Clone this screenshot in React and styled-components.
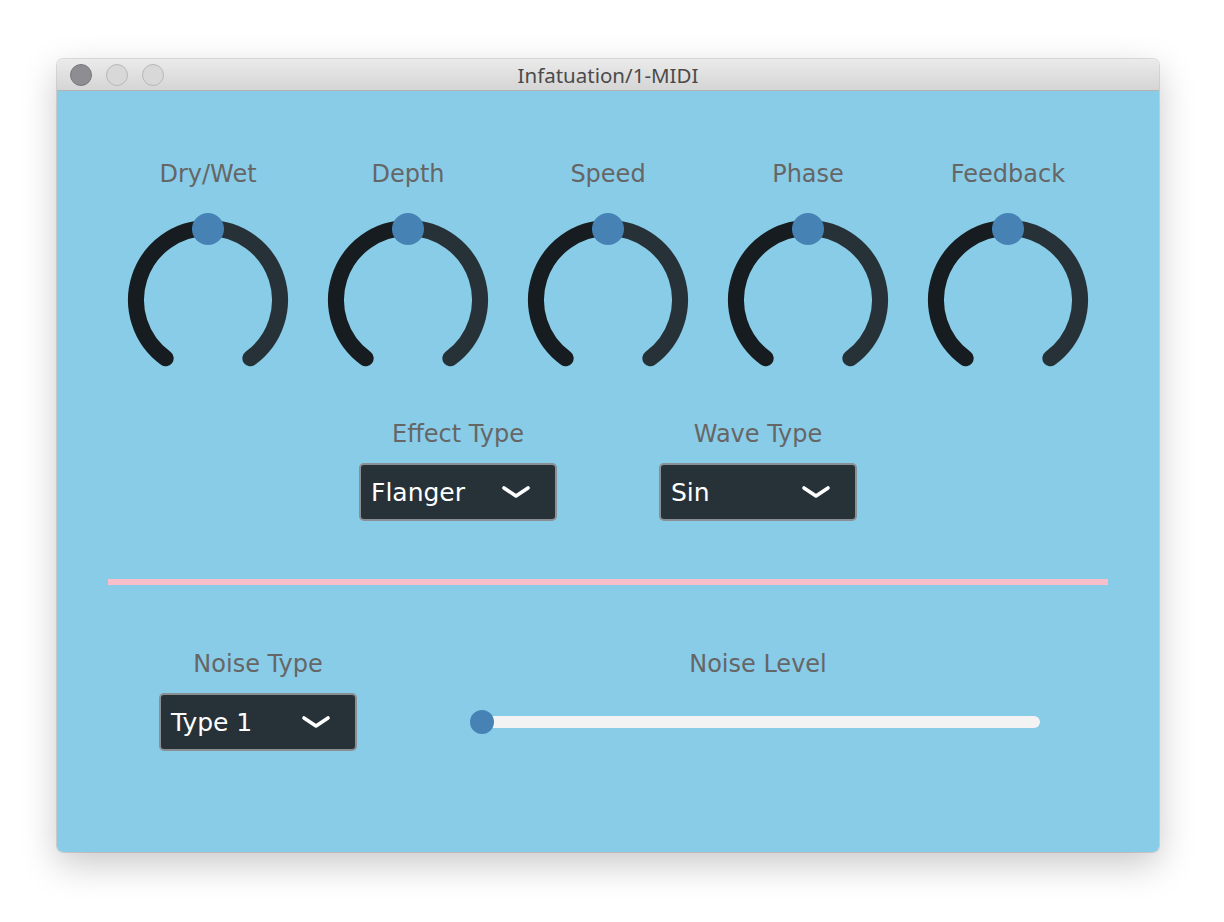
import React from "react";
import styled, { createGlobalStyle } from "styled-components";

const GlobalStyle = createGlobalStyle`
  body {
    margin: 0;
    background: #ffffff;
    font-family: "DejaVu Sans", "Liberation Sans", sans-serif;
  }
`;

const Page = styled.div`
  padding: 59px 0 0 57px;
  height: 922px;
  box-sizing: border-box;
`;

const Window = styled.div`
  width: 1102px;
  height: 793px;
  border-radius: 6px;
  overflow: hidden;
  display: flex;
  flex-direction: column;
  box-shadow: 0 12px 36px rgba(0, 0, 0, 0.22), 0 0 0 1px rgba(0, 0, 0, 0.12);
`;

const TitleBar = styled.div`
  height: 32px;
  flex: none;
  position: relative;
  display: flex;
  align-items: center;
  justify-content: center;
  background: linear-gradient(#ebebeb, #d5d5d5);
  border-bottom: 1px solid #b4b4b4;
  box-sizing: border-box;
`;

const Lights = styled.div`
  position: absolute;
  left: 13px;
  top: 5px;
  display: flex;
  gap: 14px;
`;

const Light = styled.span`
  width: 22px;
  height: 22px;
  border-radius: 50%;
  box-sizing: border-box;
  background: ${(p) => (p.$active ? "#8e8d92" : "#d8d8d8")};
  border: 1px solid ${(p) => (p.$active ? "#77767b" : "#b7b7b7")};
`;

const Title = styled.div`
  font-family: "Noto Sans", "DejaVu Sans", sans-serif;
  font-size: 20.5px;
  color: #4b4b4b;
  padding-top: 1px;
`;

const Content = styled.div`
  flex: 1;
  background: #89cce8;
  padding: 68px 51px 0;
  display: flex;
  flex-direction: column;
  align-items: center;
`;

const Label = styled.div`
  font-size: 24px;
  line-height: 28px;
  color: #666666;
  text-align: center;
  padding-top: 1px;
`;

const KnobRow = styled.div`
  display: grid;
  grid-template-columns: repeat(5, 200px);
`;

const KnobCell = styled.div`
  display: flex;
  flex-direction: column;
  align-items: center;
  gap: 22px;
`;

const KnobSvg = styled.svg`
  display: block;
`;

const SelectRow = styled.div`
  margin-top: 39px;
  display: grid;
  grid-template-columns: repeat(2, 300px);
`;

const Field = styled.div`
  display: flex;
  flex-direction: column;
  align-items: center;
  gap: 15px;
`;

const Select = styled.div`
  width: 198px;
  height: 58px;
  box-sizing: border-box;
  background: #263238;
  border: 2px solid #8a8f93;
  border-radius: 5px;
  display: flex;
  align-items: center;
  justify-content: space-between;
  padding: 0 24px 0 10px;
  color: #ffffff;
  font-size: 25px;
`;

const Divider = styled.div`
  align-self: stretch;
  height: 6px;
  margin-top: 58px;
  background: #f8bfcb;
`;

const BottomRow = styled.div`
  margin-top: 64px;
  align-self: stretch;
  display: grid;
  grid-template-columns: 300px 600px;
  column-gap: 50px;
`;

const SliderArea = styled.div`
  align-self: stretch;
  height: 58px;
  display: flex;
  align-items: center;
  padding: 0 18px 0 24px;
`;

const Track = styled.div`
  position: relative;
  flex: 1;
  height: 12px;
  border-radius: 6px;
  background: #f3f3f3;
`;

const Thumb = styled.span`
  position: absolute;
  top: 50%;
  width: 24px;
  height: 24px;
  border-radius: 50%;
  background: #4682b4;
  transform: translate(-50%, -50%);
`;

const Chevron = () => (
  <svg width="30" height="14" viewBox="0 0 30 14">
    <path
      d="M3 3 L15 11 L27 3"
      fill="none"
      stroke="#ffffff"
      strokeWidth="3.6"
      strokeLinecap="round"
      strokeLinejoin="round"
    />
  </svg>
);

function Knob({ value }) {
  const cx = 100;
  const cy = 90;
  const r = 72;
  const start = -0.8 * Math.PI;
  const end = 0.8 * Math.PI;
  const angle = start + (end - start) * value;
  const pt = (a, rad = r) => [cx + rad * Math.sin(a), cy - rad * Math.cos(a)];
  const [sx, sy] = pt(start);
  const [ex, ey] = pt(end);
  const [vx, vy] = pt(angle);
  const [tx, ty] = pt(angle, 71);
  return (
    <KnobSvg width="200" height="170" viewBox="0 0 200 170">
      <path
        d={`M${sx} ${sy} A${r} ${r} 0 0 1 ${vx} ${vy}`}
        fill="none"
        stroke="#161c1f"
        strokeWidth="16"
        strokeLinecap="round"
      />
      <path
        d={`M${vx} ${vy} A${r} ${r} 0 0 1 ${ex} ${ey}`}
        fill="none"
        stroke="#263238"
        strokeWidth="16"
        strokeLinecap="round"
      />
      <circle cx={tx} cy={ty} r="16" fill="#4682b4" />
    </KnobSvg>
  );
}

const knobs = ["Dry/Wet", "Depth", "Speed", "Phase", "Feedback"];

export default function App() {
  return (
    <Page>
      <GlobalStyle />
      <Window>
        <TitleBar>
          <Lights>
            <Light $active />
            <Light />
            <Light />
          </Lights>
          <Title>Infatuation/1-MIDI</Title>
        </TitleBar>
        <Content>
          <KnobRow>
            {knobs.map((name) => (
              <KnobCell key={name}>
                <Label>{name}</Label>
                <Knob value={0.5} />
              </KnobCell>
            ))}
          </KnobRow>

          <SelectRow>
            <Field>
              <Label>Effect Type</Label>
              <Select>
                Flanger
                <Chevron />
              </Select>
            </Field>
            <Field>
              <Label>Wave Type</Label>
              <Select>
                Sin
                <Chevron />
              </Select>
            </Field>
          </SelectRow>

          <Divider />

          <BottomRow>
            <Field>
              <Label>Noise Type</Label>
              <Select>
                Type 1
                <Chevron />
              </Select>
            </Field>
            <Field>
              <Label>Noise Level</Label>
              <SliderArea>
                <Track>
                  <Thumb style={{ left: "0%" }} />
                </Track>
              </SliderArea>
            </Field>
          </BottomRow>
        </Content>
      </Window>
    </Page>
  );
}
